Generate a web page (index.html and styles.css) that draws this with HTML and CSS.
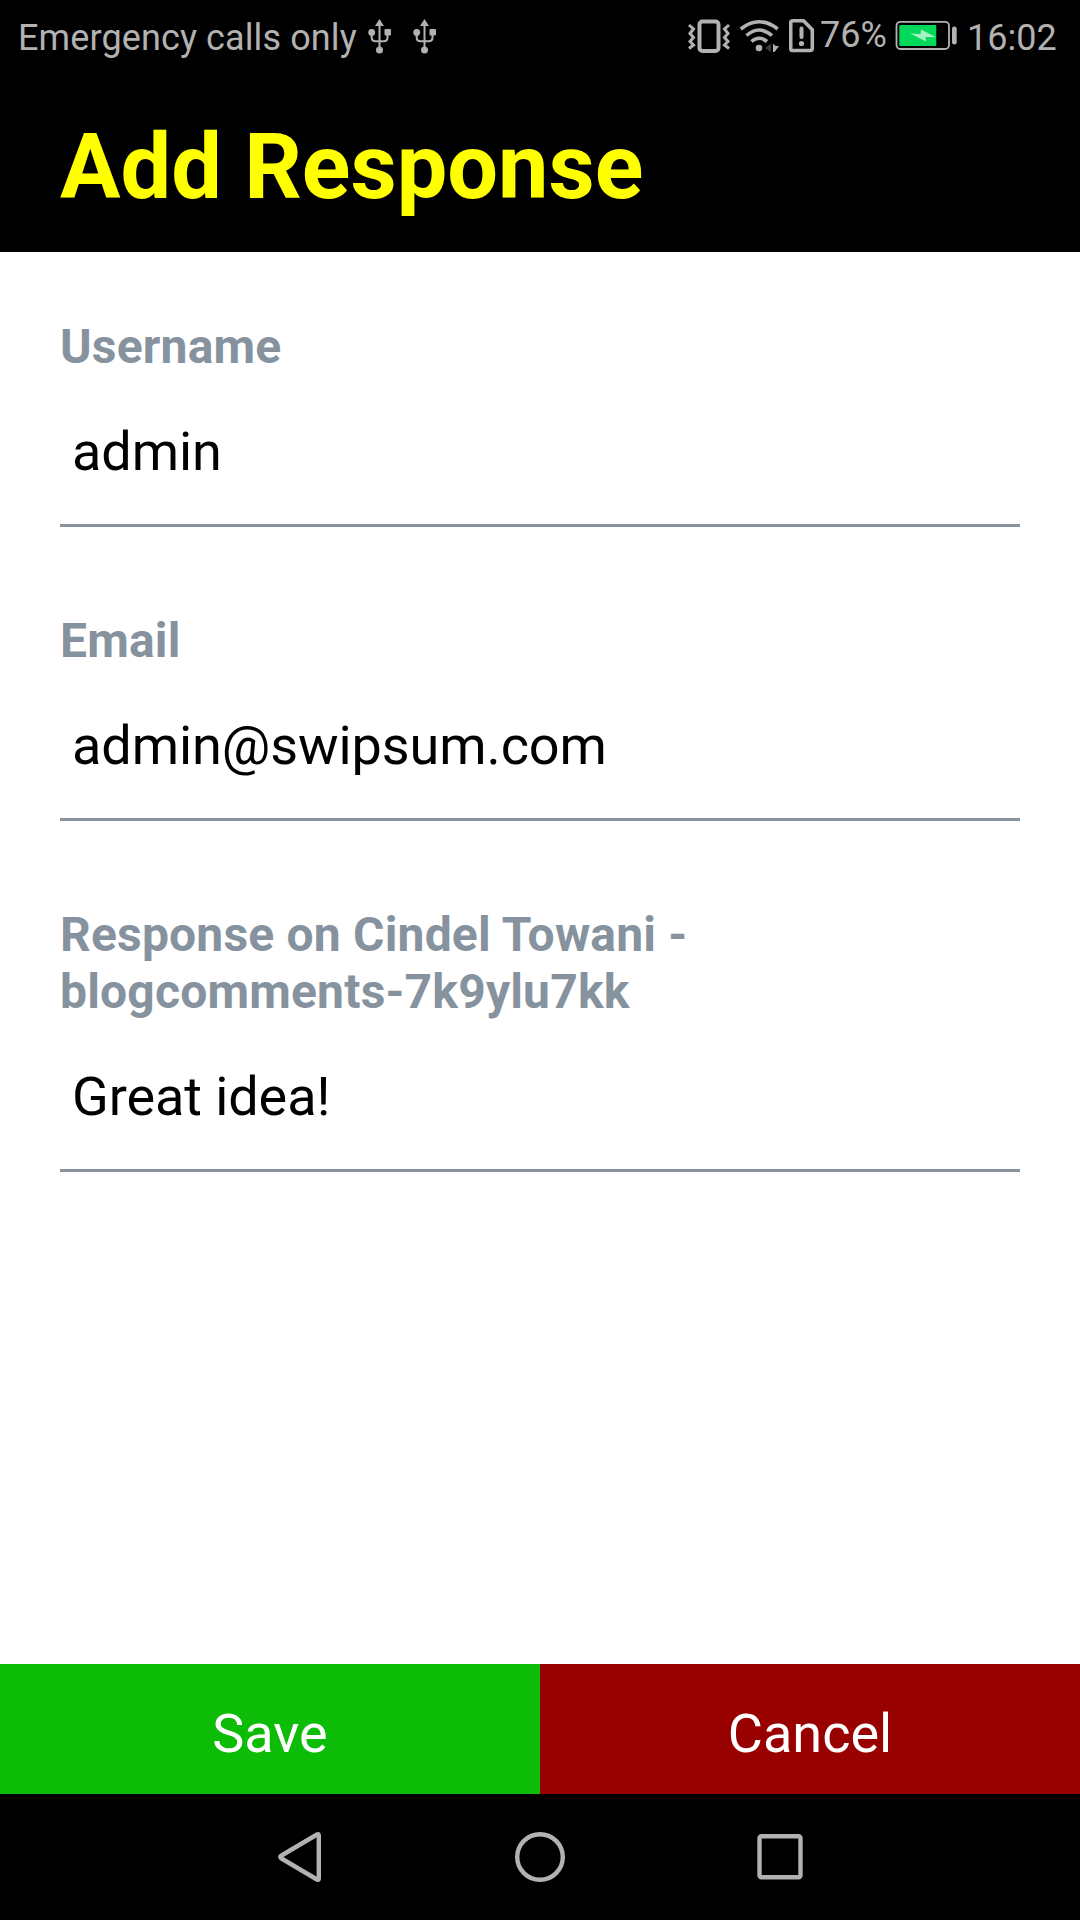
FILE: index.html
```html
<!DOCTYPE html>
<html lang="en">
<head>
<meta charset="utf-8">
<title>Add Response</title>
<link rel="stylesheet" href="styles.css">
</head>
<body>
<div class="screen">
  <div class="status-bar">
    <span class="carrier">Emergency calls only</span>
    <svg class="icon" width="24" height="72" viewBox="0 0 24 72">
      <path d="M11.500 19l4.500 7h-9z" fill="currentColor"/>
      <path d="M11.500 24v26M3.700 33v4.500q0 3.700 3.700 3.700h8.400q3.700 0 3.700-3.700V33" fill="none" stroke="currentColor" stroke-width="2"/>
      <circle cx="3.700" cy="32.500" r="3.400" fill="currentColor"/>
      <rect x="16.500" y="29" width="6.500" height="6.500" rx="1" fill="currentColor"/>
      <circle cx="11.500" cy="50" r="3.500" fill="currentColor"/>
    </svg>
    <svg class="icon usb-second" width="24" height="72" viewBox="0 0 24 72">
      <path d="M11.500 19l4.500 7h-9z" fill="currentColor"/>
      <path d="M11.500 24v26M3.700 33v4.500q0 3.700 3.700 3.700h8.400q3.700 0 3.700-3.700V33" fill="none" stroke="currentColor" stroke-width="2"/>
      <circle cx="3.700" cy="32.500" r="3.400" fill="currentColor"/>
      <rect x="16.500" y="29" width="6.500" height="6.500" rx="1" fill="currentColor"/>
      <circle cx="11.500" cy="50" r="3.500" fill="currentColor"/>
    </svg>
    <div class="indicators">
      <svg class="icon" width="52" height="72" viewBox="688 0 52 72">
        <rect x="699.500" y="21.500" width="19" height="29.500" rx="3" fill="none" stroke="currentColor" stroke-width="4"/>
        <path d="M689 25l4.500 4-3.500 4.500 3.500 4-3.500 4 3.500 3.500-4.500 3.500M729 25l-4.500 4 3.500 4.500-3.500 4 3.500 4-3.500 3.500 4.500 3.500" fill="none" stroke="currentColor" stroke-width="3"/>
      </svg>
      <svg class="icon" width="49" height="72" viewBox="740 0 49 72">
        <g fill="none" stroke="currentColor" stroke-width="3.600">
          <path d="M740.700 29q18.300-14.500 37 0"/>
          <path d="M746.500 35.500q12.500-11 25.500 0"/>
          <path d="M751.500 41.500q7.500-6.500 15.500 0"/>
        </g>
        <circle cx="759" cy="48" r="3.300" fill="currentColor"/>
        <path d="M771 43.500v8.500l-6-4z" fill="#3a3a3a"/>
        <path d="M773 43.500v8.500h1.500l4.500-6h-3.500z" fill="currentColor"/>
      </svg>
      <svg class="icon" width="30" height="72" viewBox="789 0 30 72">
        <path d="M793 20.700h10.500l8.800 9v18.500q0 2.300-2.300 2.300h-17q-2.300 0-2.300-2.300V23q0-2.300 2.300-2.300z" fill="none" stroke="currentColor" stroke-width="3.600"/>
        <path d="M801.500 28.500v8.500" stroke="currentColor" stroke-width="4" stroke-linecap="round"/>
        <circle cx="801.500" cy="43.500" r="2.600" fill="currentColor"/>
      </svg>
      <span class="battery-level">76%</span>
      <svg class="icon" width="62" height="72" viewBox="895 0 62 72">
        <rect x="896.500" y="21.800" width="52.500" height="27.200" rx="4" fill="none" stroke="currentColor" stroke-width="1.800"/>
        <rect x="899.300" y="25" width="37" height="21" rx="1" fill="#00d95a"/>
        <path d="M910 33.300l10.500 1 .5-4.800 15 7.800-10.500-.3.500 4.500z" fill="#a6f2c4"/>
        <rect x="952" y="26.500" width="4.700" height="18" rx="2.300" fill="currentColor"/>
      </svg>
      <span class="clock">16:02</span>
    </div>
  </div>

  <header class="header"><h1 class="title">Add Response</h1></header>

  <main class="form">
    <div class="field">
      <div class="label">Username</div>
      <div class="value">admin</div>
    </div>
    <div class="field">
      <div class="label">Email</div>
      <div class="value">admin@swipsum.com</div>
    </div>
    <div class="field">
      <div class="label">Response on Cindel Towani - blogcomments-7k9ylu7kk</div>
      <div class="value">Great idea!</div>
    </div>
  </main>

  <div class="actions">
    <button class="button save" type="button">Save</button>
    <button class="button cancel" type="button">Cancel</button>
  </div>

  <nav class="nav-bar">
    <svg class="nav-icon" viewBox="0 0 52 52"><path d="M43 3.500q1.800-1 1.800 1v43q0 2-1.800 1L7.500 27.500q-2.500-1.500 0-3z"/></svg>
    <svg class="nav-icon" viewBox="0 0 52 52"><circle cx="26" cy="26" r="22.800"/></svg>
    <svg class="nav-icon" viewBox="0 0 52 52"><rect x="5.500" y="5.300" width="41" height="41" rx="2"/></svg>
  </nav>
</div>
</body>
</html>
```

FILE: styles.css
```css
* {
  box-sizing: border-box;
}

body {
  margin: 0;
  background: #fff;
  font-family: Roboto, "Liberation Sans", sans-serif;
}

.screen {
  display: flex;
  flex-direction: column;
  width: 1080px;
  height: 1920px;
}

.status-bar {
  display: flex;
  align-items: flex-start;
  height: 72px;
  padding: 0 23px 0 18px;
  background: #000;
  color: #b2b2b2;
  font-size: 36px;
  line-height: 42px;
  white-space: nowrap;
}

.icon {
  display: block;
  flex: none;
}

.carrier {
  width: 350px;
  padding-top: 17px;
  letter-spacing: 0.11px;
}

.usb-second {
  margin-left: 21px;
}

.indicators {
  display: flex;
  margin-left: auto;
}

.battery-level {
  width: 76px;
  padding: 14px 0 0 1px;
}

.clock {
  width: 100px;
  padding: 17px 0 0 10px;
}

.header {
  height: 180px;
  padding: 43px 60px 0;
  background: #000;
}

.title {
  margin: 0;
  color: #ff0;
  font-size: 90px;
  font-weight: 700;
  line-height: 106px;
}

.form {
  display: flex;
  flex: 1;
  flex-direction: column;
  gap: 85px;
  padding: 66px 60px 0;
}

.label {
  color: #86939e;
  font-size: 48px;
  font-weight: 700;
  letter-spacing: 0.19px;
  line-height: 57px;
}

.value {
  padding: 45px 12px 40px;
  border-bottom: 3px solid #86939e;
  color: #000;
  font-size: 54px;
  letter-spacing: -0.08px;
  line-height: 64px;
}

.actions {
  display: flex;
  height: 130px;
}

.button {
  flex: 1;
  padding: 10px 0 0;
  border: 0;
  color: #fff;
  font-family: inherit;
  font-size: 54px;
  line-height: 64px;
}

.save {
  background: #0dbc07;
}

.cancel {
  background: #900;
}

.nav-bar {
  display: flex;
  align-items: center;
  justify-content: center;
  gap: 188px;
  height: 126px;
  background: #000;
}

.nav-icon {
  width: 52px;
  height: 52px;
  fill: none;
  stroke: #b2b2b2;
  stroke-width: 4.4;
  stroke-linejoin: round;
}
```
